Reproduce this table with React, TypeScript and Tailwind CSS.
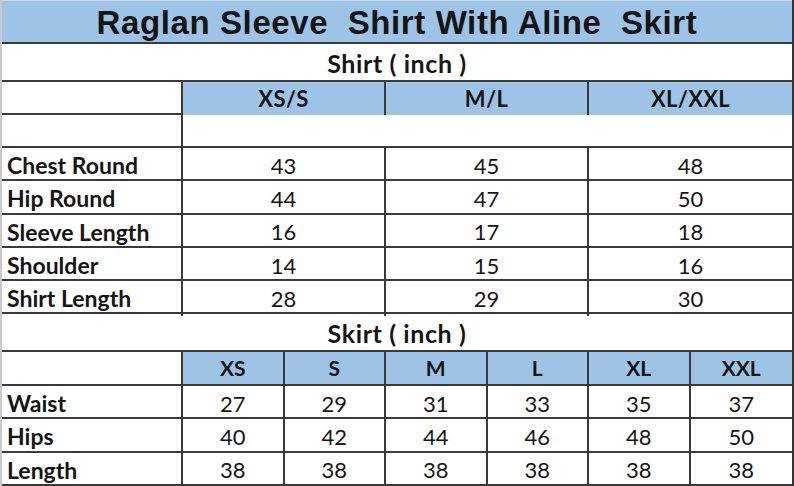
import React from "react";

const shirtRows: [string, string, string, string][] = [
  ["Chest Round", "43", "45", "48"],
  ["Hip Round", "44", "47", "50"],
  ["Sleeve Length", "16", "17", "18"],
  ["Shoulder", "14", "15", "16"],
  ["Shirt Length", "28", "29", "30"],
];

const skirtSizes = ["XS", "S", "M", "L", "XL", "XXL"];
const skirtRows: [string, string[]][] = [
  ["Waist", ["27", "29", "31", "33", "35", "37"]],
  ["Hips", ["40", "42", "44", "46", "48", "50"]],
  ["Length", ["38", "38", "38", "38", "38", "38"]],
];

const font = { fontFamily: "Lato, 'Open Sans', sans-serif" };

export default function App() {
  return (
    <div className="w-[794px] h-[486px] bg-white overflow-hidden text-[#151515]" style={font}>
      <div className="w-[794px] border-l-2 border-l-[#c9c9c9] border-r-2 border-r-[#333] flex flex-col">
        {/* Title */}
        <div className="h-[44px] bg-[#9dc3e6] border-t border-t-[#c9d7e6] border-b-2 border-b-[#3a3a3a] flex items-center justify-center pt-[3px]">
          <span className="text-[33px] font-bold tracking-[0.6px] whitespace-pre" style={{ fontFamily: "'Liberation Sans', Arial, sans-serif" }}>
            Raglan Sleeve  Shirt With Aline  Skirt
          </span>
        </div>
        {/* Shirt (inch) */}
        <div className="h-[38px] border-b-2 border-b-[#3a3a3a] flex items-center justify-center pt-[3px]">
          <span className="text-[25px] font-bold tracking-[0.6px] whitespace-pre">Shirt ( inch )</span>
        </div>
        {/* Shirt header */}
        <div className="h-[33px] border-b-2 border-b-[#3a3a3a] grid grid-cols-[181px_1fr_1fr_1fr]">
          <div className="border-r-2 border-r-[#3a3a3a]" />
          {["XS/S", "M/L", "XL/XXL"].map((s, i) => (
            <div
              key={s}
              className={`bg-[#9dc3e6] flex items-center justify-center text-[22px] font-bold tracking-[0.3px] ${i < 2 ? "border-r-2 border-r-[#3a3a3a]" : ""}`}
            >
              {s}
            </div>
          ))}
        </div>
        {/* Empty row */}
        <div className="h-[33px] border-b-2 border-b-[#3a3a3a] grid grid-cols-[181px_1fr]">
          <div className="border-r-2 border-r-[#3a3a3a]" />
          <div />
        </div>
        {shirtRows.map((r) => (
          <div key={r[0]} className="h-[33.3px] border-b-2 border-b-[#3a3a3a] grid grid-cols-[181px_1fr_1fr_1fr]">
            <div className="border-r-2 border-r-[#3a3a3a] flex items-center pl-[5px] text-[23px] font-bold whitespace-nowrap">
              {r[0]}
            </div>
            {r.slice(1).map((v, i) => (
              <div
                key={i}
                className={`flex items-center justify-center text-[22px] ${i < 2 ? "border-r-2 border-r-[#3a3a3a]" : ""}`}
              >
                {v}
              </div>
            ))}
          </div>
        ))}
        {/* Skirt (inch) */}
        <div className="h-[38px] border-b-2 border-b-[#3a3a3a] flex items-center justify-center pt-[3px]">
          <span className="text-[25px] font-bold tracking-[0.6px] whitespace-pre">Skirt ( inch )</span>
        </div>
        {/* Skirt header */}
        <div className="h-[33.3px] border-b-2 border-b-[#3a3a3a] grid grid-cols-[181px_1fr_1fr_1fr_1fr_1fr_1fr]">
          <div className="border-r-2 border-r-[#3a3a3a]" />
          {skirtSizes.map((s, i) => (
            <div
              key={s}
              className={`bg-[#9dc3e6] flex items-center justify-center text-[21px] font-bold ${i < 5 ? "border-r-2 border-r-[#3a3a3a]" : ""}`}
            >
              {s}
            </div>
          ))}
        </div>
        {skirtRows.map(([label, vals]) => (
          <div
            key={label}
            className="h-[33.4px] grid grid-cols-[181px_1fr_1fr_1fr_1fr_1fr_1fr] border-b-2 border-b-[#3a3a3a]"
          >
            <div className="border-r-2 border-r-[#3a3a3a] flex items-center pl-[5px] text-[23px] font-bold whitespace-nowrap">
              {label}
            </div>
            {vals.map((v, i) => (
              <div
                key={i}
                className={`flex items-center justify-center text-[22px] ${i < 5 ? "border-r-2 border-r-[#3a3a3a]" : ""}`}
              >
                {v}
              </div>
            ))}
          </div>
        ))}
      </div>
    </div>
  );
}
